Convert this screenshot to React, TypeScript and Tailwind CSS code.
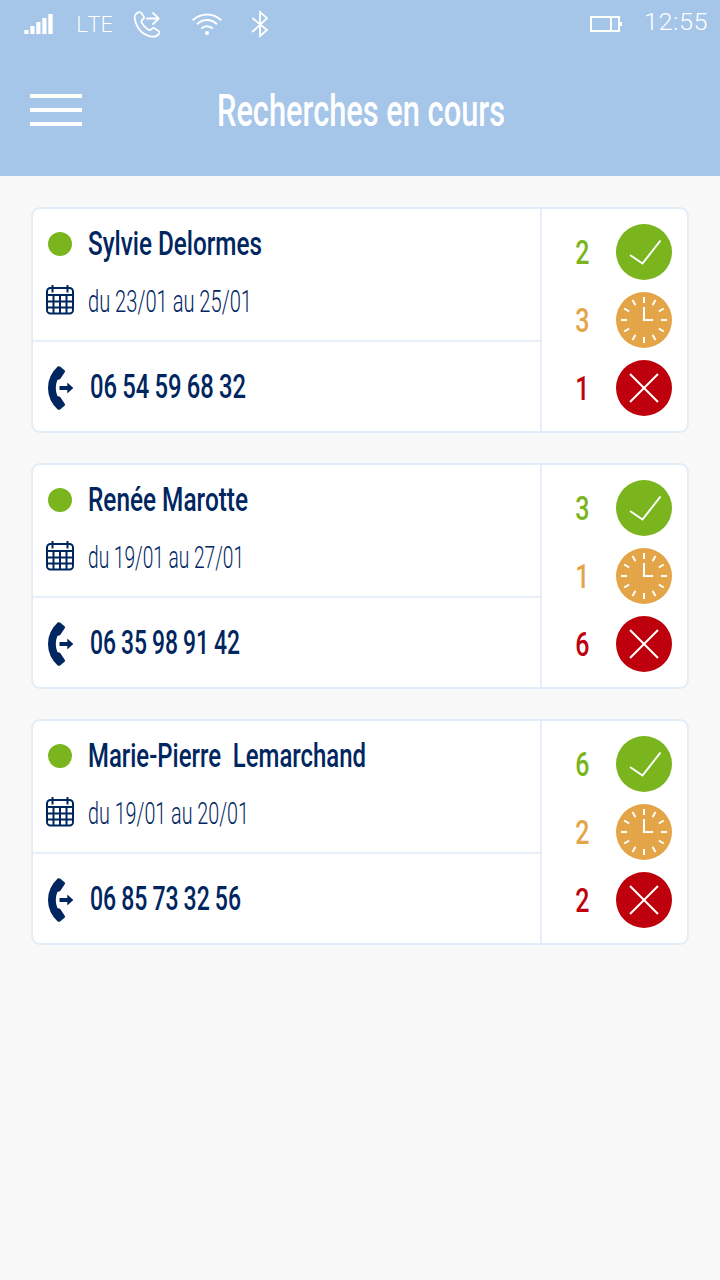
import { useLayoutEffect, useRef } from 'react';
import { clsx } from 'clsx';

interface Search {
  name: string;
  nameWidth: number;
  dates: string;
  datesWidth: number;
  phone: string;
  phoneWidth: number;
  accepted: number;
  pending: number;
  refused: number;
}

const searches: Search[] = [
  {
    name: 'Sylvie Delormes',
    nameWidth: 174,
    dates: 'du 23/01 au 25/01',
    datesWidth: 165,
    phone: '06 54 59 68 32',
    phoneWidth: 156,
    accepted: 2,
    pending: 3,
    refused: 1
  },
  {
    name: 'Renée Marotte',
    nameWidth: 160,
    dates: 'du 19/01 au 27/01',
    datesWidth: 157,
    phone: '06 35 98 91 42',
    phoneWidth: 150,
    accepted: 3,
    pending: 1,
    refused: 6
  },
  {
    name: 'Marie-Pierre  Lemarchand',
    nameWidth: 278,
    dates: 'du 19/01 au 20/01',
    datesWidth: 162,
    phone: '06 85 73 32 56',
    phoneWidth: 151,
    accepted: 6,
    pending: 2,
    refused: 2
  }
];

interface FitTextProps {
  children: string;
  width: number;
  className?: string;
}

// Squeezes a line of text horizontally so that it fills exactly `width` pixels.
const FitText = ({ children, width, className }: FitTextProps) => {
  const ref = useRef<HTMLSpanElement>(null);

  useLayoutEffect(() => {
    const el = ref.current;
    if (el) {
      el.style.transform = `scaleX(${width / el.getBoundingClientRect().width})`;
    }
    return () => {
      if (el) el.style.transform = '';
    };
  }, [children, width]);

  return (
    <span className="block" style={{ width }}>
      <span ref={ref} className={clsx('inline-block origin-left whitespace-pre align-top', className)}>
        {children}
      </span>
    </span>
  );
};

const StatusBar = () => (
  <div className="flex h-12 items-center text-white">
    <svg className="ml-6 h-5 w-[30px]" viewBox="0 0 30 20" fill="currentColor">
      <path d="M.3 16h4.2v4H.3zM6.3 12h4.2v8H6.3zM12.3 8h4.2v12h-4.2zM18.3 4h4.2v16h-4.2zM24.3 0h4.4v20h-4.4z" />
    </svg>
    <div className="ml-[22px] font-['Open_Sans'] text-[22.5px] leading-none font-[350]">
      <FitText width={37}>LTE</FitText>
    </div>
    <svg
      className="ml-5 h-7 w-7"
      viewBox="0 0 28 28"
      fill="none"
      stroke="currentColor"
      strokeWidth="1.8"
      strokeLinecap="round"
      strokeLinejoin="round"
    >
      <path d="M4.2 2.9C2 4.2 1.2 6.4 1.9 9.5C4 18.5 10 25.2 18.8 26.6C22.5 27.1 24.8 25.8 26.2 23.2C26.6 22.3 26.2 21.6 25.5 21L21.8 18.4C20.8 17.7 19.8 17.9 19.1 18.7C17.6 20.5 16.7 20.5 15 19.4C12.3 17.6 10.2 15.3 8.7 12.6C8 11.2 8.4 10.3 10 9.3C11 8.6 11.3 7.6 10.7 6.6L8.7 3.3C7.7 1.8 5.9 1.9 4.2 2.9Z" />
      <path d="M14 8.5H25.5M20 3L25.7 8.5L20 14" />
    </svg>
    <svg
      className="ml-[30px] h-7 w-8"
      viewBox="0 0 32 28"
      fill="none"
      stroke="currentColor"
      strokeWidth="2"
    >
      <path d="M1.7 10.3C10 2.6 22 2.6 30.3 10.3M6 14.2C12 8.6 20 8.6 26 14.2M10.3 18.6C13.7 15.6 18.3 15.6 21.7 18.6" />
      <circle cx="16" cy="23" r="2.1" fill="currentColor" stroke="none" />
    </svg>
    <svg
      className="ml-7 h-7 w-[18px]"
      viewBox="0 0 18 28"
      fill="none"
      stroke="currentColor"
      strokeWidth="1.8"
    >
      <path d="M1.3 8L16 20L9 26V2L16 8.2L1.3 22" />
    </svg>
    <svg className="ml-auto h-4 w-8" viewBox="0 0 32 16" fill="none" stroke="currentColor" strokeWidth="2">
      <path d="M1 1H29V15H1ZM21 1V15" />
      <path d="M30 6h2v4h-2z" fill="currentColor" stroke="none" />
    </svg>
    <div className="mr-3 ml-[22px] -mt-0.5 font-[Roboto] text-[23.5px] leading-none font-[350] tracking-[.5px]">
      <FitText width={64}>12:55</FitText>
    </div>
  </div>
);

const Header = () => (
  <header className="h-44 bg-[#a5c5e9]">
    <StatusBar />
    <div className="grid h-[124px] grid-cols-[218px_1fr] text-white">
      <button type="button" aria-label="Menu" className="mt-[46px] ml-[30px] flex h-8 w-[52px] flex-col justify-between">
        <span className="h-1 w-full bg-white" />
        <span className="h-1 w-full bg-white" />
        <span className="h-1 w-full bg-white" />
      </button>
      <h1 className="mt-10 -ml-px font-[Roboto] text-[44px] leading-[46px] font-medium">
        <FitText width={288}>Recherches en cours</FitText>
      </h1>
    </div>
  </header>
);

const CalendarIcon = () => (
  <svg className="h-[30px] w-7" viewBox="0 0 28 30" fill="none" stroke="currentColor">
    <rect x="1" y="3" width="26" height="25.5" rx="3.5" strokeWidth="2" />
    <path d="M6.5 0V7.5M21.5 0V7.5" strokeWidth="2" />
    <path d="M1 10H27" strokeWidth="2" />
    <path d="M1 16.5H27M1 22.5H27M7.5 10V28M14 10V28M20.5 10V28" strokeWidth="2" />
  </svg>
);

const CallIcon = () => (
  <svg className="h-[44px] w-[26px]" viewBox="0 0 26 44" fill="currentColor">
    <path d="M9.7.6Q11 -.3 12.4.7L16.5 4.2Q17.5 5.2 16.7 6.2L12.4 12.7Q11.5 13.8 9.5 13.7Q7.8 17.5 7.8 22T9.5 30.3Q11.5 30.2 12.4 31.3L16.7 37.8Q17.5 38.8 16.5 39.8L12.4 43.3Q11 44.3 9.7 43.4Q0 34.5 0 22T9.7.6Z" />
    <path d="M11.5 20H19.3V16.5L25.3 22L19.3 27.5V24H11.5Z" />
  </svg>
);

type Status = 'accepted' | 'pending' | 'refused';

const hourMarks = [0, 30, 60, 90, 120, 150, 180, 210, 240, 270, 300, 330];

const StatusIcon = ({ status }: { status: Status }) => (
  <svg className="h-14 w-14" viewBox="0 0 56 56" fill="none">
    <circle cx="28" cy="28" r="28" fill="currentColor" />
    <g stroke="white" strokeWidth="2">
      {status === 'accepted' && <path d="M14 31L26.5 39.5L44.5 16.5" />}
      {status === 'pending' && (
        <>
          {hourMarks.map((angle) => (
            <path key={angle} d="M28 5V11" transform={`rotate(${angle} 28 28)`} />
          ))}
          <path d="M28 15V28H37" />
        </>
      )}
      {status === 'refused' && <path d="M14 14L42 42M42 14L14 42" />}
    </g>
  </svg>
);

const StatusRow = ({ status, count }: { status: Status; count: number }) => (
  <div
    className={clsx(
      'flex items-center justify-end gap-[27px]',
      status === 'accepted' && 'text-[#7ab51d]',
      status === 'pending' && 'text-[#e3a547]',
      status === 'refused' && 'text-[#be000c]'
    )}
  >
    <span className="mt-0.5 origin-right scale-x-[.77] font-[Roboto] text-[32.5px] leading-none font-medium">{count}</span>
    <StatusIcon status={status} />
  </div>
);

const SearchCard = ({ search }: { search: Search }) => (
  <article className="flex h-[226px] rounded-[9px] border-2 border-[#e2edf8] bg-white font-[Roboto] text-[#00265f]">
    <div className="flex flex-1 flex-col">
      <div className="h-[133px] border-b-2 border-[#e6effa] pt-[15px]">
        <div className="flex h-10 items-center">
          <span className="ml-[15px] h-6 w-6 rounded-full bg-[#7ab51d]" />
          <h2 className="ml-4 text-[33.5px] leading-10 font-[550]">
            <FitText width={search.nameWidth}>{search.name}</FitText>
          </h2>
        </div>
        <div className="mt-4 flex h-10 items-center">
          <span className="ml-[13px]">
            <CalendarIcon />
          </span>
          <p className="mt-1 ml-3.5 text-[31px] leading-10 font-[330]">
            <FitText width={search.datesWidth - 1}>{search.dates}</FitText>
          </p>
        </div>
      </div>
      <div className="flex flex-1 items-center">
        <span className="mt-0.5 ml-[15px]">
          <CallIcon />
        </span>
        <p className="ml-4 text-[32.5px] leading-10 font-medium [word-spacing:-1px]">
          <FitText width={search.phoneWidth}>{search.phone}</FitText>
        </p>
      </div>
    </div>
    <div className="flex w-[147px] flex-col gap-3 border-l-2 border-[#e6effa] pt-[15px] pr-[15px]">
      <StatusRow status="accepted" count={search.accepted} />
      <StatusRow status="pending" count={search.pending} />
      <StatusRow status="refused" count={search.refused} />
    </div>
  </article>
);

const App = () => (
  <div className="min-h-screen bg-[#f8f8f8]">
    <Header />
    <main className="flex flex-col gap-[30px] px-[31px] pt-[31px]">
      {searches.map((search) => (
        <SearchCard key={search.phone} search={search} />
      ))}
    </main>
  </div>
);

export default App;
